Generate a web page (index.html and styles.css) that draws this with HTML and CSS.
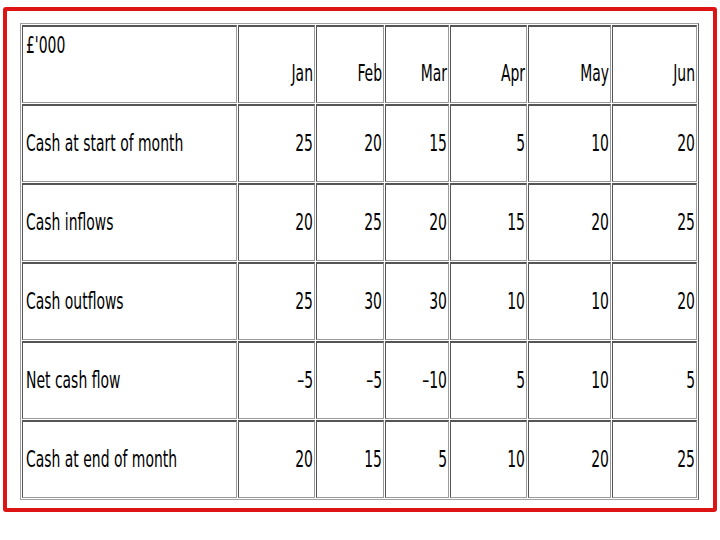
FILE: index.html
```html
<!DOCTYPE html>
<html>
<head>
<meta charset="utf-8">
<link rel="stylesheet" href="styles.css">
</head>
<body>
<div class="frame">
  <table class="cash">
    <colgroup>
      <col class="c-label">
      <col class="c-jan">
      <col class="c-feb">
      <col class="c-mar">
      <col class="c-apr">
      <col class="c-may">
      <col class="c-jun">
    </colgroup>
    <tr class="head">
      <td class="corner"><span class="t">£'000</span></td>
      <td class="num"><span class="t">Jan</span></td>
      <td class="num"><span class="t">Feb</span></td>
      <td class="num"><span class="t">Mar</span></td>
      <td class="num"><span class="t">Apr</span></td>
      <td class="num"><span class="t">May</span></td>
      <td class="num"><span class="t">Jun</span></td>
    </tr>
    <tr>
      <td class="label"><span class="t">Cash at start of month</span></td>
      <td class="num"><span class="t">25</span></td>
      <td class="num"><span class="t">20</span></td>
      <td class="num"><span class="t">15</span></td>
      <td class="num"><span class="t">5</span></td>
      <td class="num"><span class="t">10</span></td>
      <td class="num"><span class="t">20</span></td>
    </tr>
    <tr>
      <td class="label"><span class="t">Cash inflows</span></td>
      <td class="num"><span class="t">20</span></td>
      <td class="num"><span class="t">25</span></td>
      <td class="num"><span class="t">20</span></td>
      <td class="num"><span class="t">15</span></td>
      <td class="num"><span class="t">20</span></td>
      <td class="num"><span class="t">25</span></td>
    </tr>
    <tr>
      <td class="label"><span class="t">Cash outflows</span></td>
      <td class="num"><span class="t">25</span></td>
      <td class="num"><span class="t">30</span></td>
      <td class="num"><span class="t">30</span></td>
      <td class="num"><span class="t">10</span></td>
      <td class="num"><span class="t">10</span></td>
      <td class="num"><span class="t">20</span></td>
    </tr>
    <tr>
      <td class="label"><span class="t">Net cash flow</span></td>
      <td class="num"><span class="t">–5</span></td>
      <td class="num"><span class="t">–5</span></td>
      <td class="num"><span class="t">–10</span></td>
      <td class="num"><span class="t">5</span></td>
      <td class="num"><span class="t">10</span></td>
      <td class="num"><span class="t">5</span></td>
    </tr>
    <tr>
      <td class="label"><span class="t">Cash at end of month</span></td>
      <td class="num"><span class="t">20</span></td>
      <td class="num"><span class="t">15</span></td>
      <td class="num"><span class="t">5</span></td>
      <td class="num"><span class="t">10</span></td>
      <td class="num"><span class="t">20</span></td>
      <td class="num"><span class="t">25</span></td>
    </tr>
  </table>
</div>
</body>
</html>
```

FILE: styles.css
```css
html, body {
  margin: 0;
  padding: 0;
  background: #ffffff;
}

body {
  width: 720px;
  height: 540px;
  overflow: hidden;
  padding-top: 7px;
  box-sizing: border-box;
}

.frame {
  margin-left: 3px;
  width: 714px;
  height: 505px;
  box-sizing: border-box;
  border: 4px solid #dc1414;
  border-radius: 3px;
  padding: 12px 0 0 13px;
}

.cash {
  table-layout: fixed;
  border-collapse: separate;
  border-spacing: 1px;
  border: 1px solid;
  border-color: #a0a0a0 #606060 #a0a0a0 #a0a0a0;
  font-family: "DejaVu Sans Condensed", "DejaVu Sans", sans-serif;
  font-stretch: condensed;
  font-size: 15.5px;
  color: #000000;
}

.c-label { width: 215px; }
.c-jan { width: 77px; }
.c-feb { width: 68px; }
.c-mar { width: 64px; }
.c-apr { width: 77px; }
.c-may { width: 83px; }
.c-jun { width: 85px; }

.cash tr {
  height: 78px;
}

.cash td {
  border-style: solid;
  border-width: 2px 1px 1px 1px;
  border-color: #555555 #9a9a9a #9a9a9a #555555;
  padding: 0;
  vertical-align: middle;
  line-height: 18px;
}

.cash .label {
  text-align: left;
  padding-left: 3px;
}

.cash .num {
  text-align: right;
  padding-right: 1px;
}

.cash .head .num {
  padding-top: 18px;
}

.cash .corner {
  vertical-align: top;
  padding-left: 3px;
  padding-top: 10px;
}

.t {
  display: inline-block;
  transform: scaleY(1.45);
  white-space: nowrap;
}
```
